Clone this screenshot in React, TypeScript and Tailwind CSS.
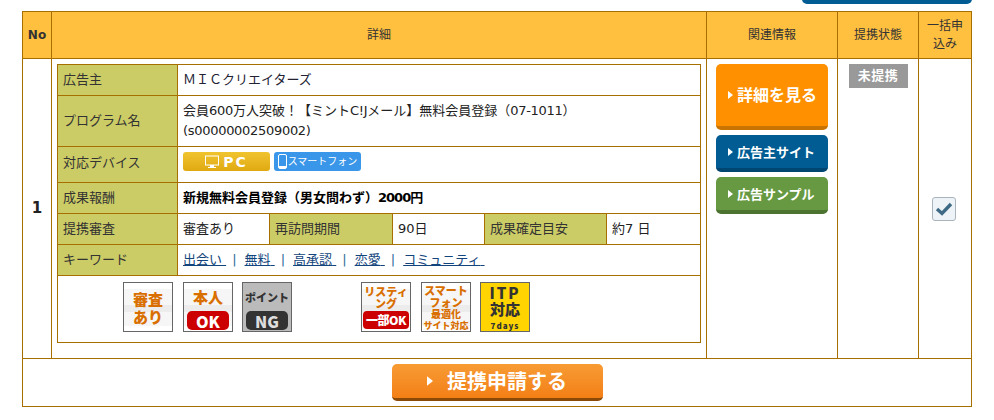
import { ReactNode } from 'react';

const JP = '[font-family:"DejaVu_Sans","Noto_Sans_CJK_JP",sans-serif]';
const CJK = '[font-family:"Noto_Sans_CJK_JP",sans-serif]';

const labelCell = 'border border-[#a66f00] bg-[#cccc66] px-[5px] pb-[1px] text-left align-middle font-normal text-[#333]';
const valueCell = 'border border-[#a66f00] bg-white px-[5px] pb-[1px] align-middle text-[#222]';
const headCell = 'border border-[#a66f00] bg-[#ffbf3f] text-center align-middle text-[12px] font-normal leading-[18px] text-[#333]';
const band = 'bg-[linear-gradient(#fff_0,#fff_12%,#f6f6f6_12%,#f6f6f6_46%,#ececec_46%,#ececec_60%,#f6f6f6_60%,#f6f6f6_90%,#fff_90%)]';

function Arrow({ size = 4 }: { size?: number }) {
    return (
        <svg width={size + 1} height={size * 2} viewBox="0 0 5 8" className="shrink-0">
            <path d="M0 0 L5 4 L0 8 Z" fill="#fff" />
        </svg>
    );
}

function SideButton({ label, color, dark, tall }: { label: string; color: string; dark: string; tall?: boolean }) {
    return (
        <div
            className={`flex w-[112px] items-center gap-[4px] rounded-[5px] border-b-[4px] pl-[12px] font-bold text-white ${color} ${dark} ${tall ? 'h-[66px] text-[16px]' : 'h-[37px] text-[13px]'}`}
        >
            <Arrow />
            <span className="pt-[2px]">{label}</span>
        </div>
    );
}

function Badge({ children, className = '' }: { children: ReactNode; className?: string }) {
    return (
        <div className={`flex h-[50px] w-[50px] shrink-0 flex-col items-center overflow-hidden border border-[#666] font-black ${CJK} ${className}`}>
            {children}
        </div>
    );
}

const keywords = ['出会い', '無料', '高承認', '恋愛', 'コミュニティ'];

export default function App() {
    return (
        <div className={`relative h-[420px] w-[994px] overflow-hidden bg-white pl-[22px] pt-[11px] text-[13px] ${JP}`}>
            {/* top button, cut off by the viewport */}
            <div className="absolute left-[802px] top-[-10px] h-[14px] w-[170px] rounded-b-[5px] bg-[#005c92]" />

            <table className="w-[949px] table-fixed border-collapse">
                <colgroup>
                    <col className="w-[29px]" />
                    <col className="w-[655px]" />
                    <col className="w-[131px]" />
                    <col className="w-[81px]" />
                    <col className="w-[53px]" />
                </colgroup>
                <thead>
                    <tr className="h-[47px]">
                        <th className={`${headCell} !font-bold`}>No</th>
                        <th className={headCell}>詳細</th>
                        <th className={headCell}>関連情報</th>
                        <th className={headCell}>提携状態</th>
                        <th className={headCell}>
                            一括申
                            <br />
                            込み
                        </th>
                    </tr>
                </thead>
                <tbody>
                    <tr className="h-[300px]">
                        <td className="border border-[#a66f00] pb-[1px] text-center align-middle text-[15px] font-bold text-[#222]">1</td>
                        <td className="border border-[#a66f00] px-[5px] py-[5px] align-top">
                            <table className="w-[643px] table-fixed border-collapse leading-[20px]">
                                <colgroup>
                                    <col className="w-[120px]" />
                                    <col className="w-[92px]" />
                                    <col className="w-[123px]" />
                                    <col className="w-[92px]" />
                                    <col className="w-[122px]" />
                                    <col className="w-[94px]" />
                                </colgroup>
                                <tbody>
                                    <tr className="h-[31px]">
                                        <th className={labelCell}>広告主</th>
                                        <td className={`${valueCell} text-[#223]`} colSpan={5}>ＭＩＣクリエイターズ</td>
                                    </tr>
                                    <tr className="h-[51px]">
                                        <th className={labelCell}>プログラム名</th>
                                        <td className={valueCell} colSpan={5}>
                                            会員<span className="tracking-[-0.3px]">600</span>万人突破！【ミント<span className="tracking-[-0.3px]">C!J</span>メール】無料会員登録（<span className="tracking-[-0.3px]">07-1011</span>）
                                            <br />
                                            <span className="tracking-[-0.3px]">(s00000002509002)</span>
                                        </td>
                                    </tr>
                                    <tr className="h-[36px]">
                                        <th className={`${labelCell} !pb-[3px]`}>対応デバイス</th>
                                        <td className={`${valueCell} !pb-[6px]`} colSpan={5}>
                                            <div className="flex gap-[4px]">
                                                <div className="flex h-[19px] w-[87px] items-center justify-center gap-[4px] rounded-[3px] bg-gradient-to-b from-[#f0c42e] to-[#e0a90f]">
                                                    <svg width="14" height="14" viewBox="0 0 14 14">
                                                        <rect x="0.5" y="1" width="13" height="9" fill="none" stroke="#fff" />
                                                        <path d="M5 10h4v2h2v1H3v-1h2z" fill="#fff" />
                                                    </svg>
                                                    <span className="text-[14px] font-bold leading-none tracking-[2px] text-white">PC</span>
                                                </div>
                                                <div className="flex h-[19px] w-[87px] items-center justify-center gap-[1px] rounded-[3px] bg-[#3a96e8]">
                                                    <svg width="9" height="15" viewBox="0 0 9 15">
                                                        <rect x="0.5" y="0.5" width="8" height="14" rx="1.5" fill="#3a96e8" stroke="#fff" />
                                                        <rect x="1" y="12" width="7" height="2" fill="#fff" />
                                                    </svg>
                                                    <span className="text-[10px] leading-none text-white">スマートフォン</span>
                                                </div>
                                            </div>
                                        </td>
                                    </tr>
                                    <tr className="h-[31px]">
                                        <th className={labelCell}>成果報酬</th>
                                        <td className={`${valueCell} font-bold text-black`} colSpan={5}>新規無料会員登録（男女問わず）<span className="tracking-[-1px]">2000</span>円</td>
                                    </tr>
                                    <tr className="h-[31px]">
                                        <th className={labelCell}>提携審査</th>
                                        <td className={valueCell}>審査あり</td>
                                        <th className={labelCell}>再訪問期間</th>
                                        <td className={valueCell}>90日</td>
                                        <th className={labelCell}>成果確定目安</th>
                                        <td className={valueCell}>約7 日</td>
                                    </tr>
                                    <tr className="h-[31px]">
                                        <th className={labelCell}>キーワード</th>
                                        <td className={`${valueCell} text-[#12457c]`} colSpan={5}>
                                            {keywords.map((word, i) => (
                                                <span key={word}>
                                                    <span className="underline">{word}{'\u00a0'}</span>
                                                    {i < keywords.length - 1 && <span className="ml-[6px] mr-[8px] text-[#2a6a9a]">|</span>}
                                                </span>
                                            ))}
                                        </td>
                                    </tr>
                                    <tr className="h-[67px]">
                                        <td className="border border-[#a66f00] pl-[65px] pt-[6px] align-top" colSpan={6}>
                                            <div className="flex leading-none">
                                                <Badge className={`${band} pt-[7px] text-[15px] leading-[18px] text-[#d96f00]`}>
                                                    <span>審査</span>
                                                    <span>あり</span>
                                                </Badge>
                                                <Badge className={`${band} ml-[10px] pt-[5px] text-[15px] leading-[18px] text-[#d96f00]`}>
                                                    <span>本人</span>
                                                    <span className="mt-[5px] flex h-[19px] w-[42px] items-center justify-center rounded-[5px] bg-[#cc0000] text-[16px] text-white">OK</span>
                                                </Badge>
                                                <Badge className="ml-[9px] bg-[#bbbbbb] pt-[7px] text-[11px] leading-[14px] text-[#333]">
                                                    <span>ポイント</span>
                                                    <span className="mt-[7px] flex h-[19px] w-[42px] items-center justify-center rounded-[5px] bg-[#333] text-[16px] text-[#ddd]">NG</span>
                                                </Badge>
                                                <Badge className={`${band} ml-[69px] pt-[2px] text-center text-[11px] leading-[12px] text-[#d96f00]`}>
                                                    <span>リスティ</span>
                                                    <span>ング</span>
                                                    <span className="mt-[2px] flex h-[18px] w-[46px] items-center justify-center rounded-[4px] bg-[#cc0000] text-[12px] tracking-[-0.5px] text-white">一部OK</span>
                                                </Badge>
                                                <Badge className={`${band} ml-[10px] pt-[1px] text-center text-[11px] leading-[12px] text-[#d96f00]`}>
                                                    <span>スマート</span>
                                                    <span>フォン</span>
                                                    <span className="text-[10px] leading-[12px]">最適化</span>
                                                    <span className="whitespace-nowrap text-[9px] leading-[11px]">サイト対応</span>
                                                </Badge>
                                                <Badge className="ml-[9px] bg-[#ffd400] pt-[2px] text-[15px] leading-[16px] text-[#333]">
                                                    <span className="tracking-[2px]">ITP</span>
                                                    <span>対応</span>
                                                    <span className="mt-[4px] text-[8px] leading-[10px] tracking-[1px]">7days</span>
                                                </Badge>
                                            </div>
                                        </td>
                                    </tr>
                                </tbody>
                            </table>
                        </td>
                        <td className="border border-[#a66f00] px-[9px] pt-[5px] align-top">
                            <div className="flex flex-col gap-[5px]">
                                <SideButton label="詳細を見る" color="bg-[#ff9100]" dark="border-[#c97300]" tall />
                                <SideButton label="広告主サイト" color="bg-[#005c92]" dark="border-[#004670]" />
                                <SideButton label="広告サンプル" color="bg-[#669941]" dark="border-[#4d7331]" />
                            </div>
                        </td>
                        <td className="border border-[#a66f00] pt-[5px] align-top">
                            <div className="mx-auto flex h-[24px] w-[59px] items-center justify-center bg-[#999] text-[13px] font-bold tracking-[0.5px] text-white">未提携</div>
                        </td>
                        <td className="border border-[#a66f00] pr-[2px] align-middle">
                            <div className="mx-auto flex h-[24px] w-[24px] items-center justify-center rounded-[3px] border border-[#aab4bb] bg-[#edf3f7]">
                                <svg width="18" height="14" viewBox="0 0 18 14">
                                    <path d="M2 7 L7 11.5 L16 2" fill="none" stroke="#3f6a85" strokeWidth="3.4" />
                                </svg>
                            </div>
                        </td>
                    </tr>
                    <tr className="h-[48px]">
                        <td className="border border-[#a66f00] pb-[1px] align-middle" colSpan={5}>
                            <div className="mx-auto flex h-[37px] w-[211px] items-center justify-center gap-[14px] rounded-[5px] border-b-[3px] border-[#8c4a08] bg-gradient-to-b from-[#f89b33] to-[#f37f14]">
                                <Arrow size={5} />
                                <span className="pt-[3px] text-[20px] font-bold leading-none text-white">提携申請する</span>
                            </div>
                        </td>
                    </tr>
                </tbody>
            </table>
        </div>
    );
}
